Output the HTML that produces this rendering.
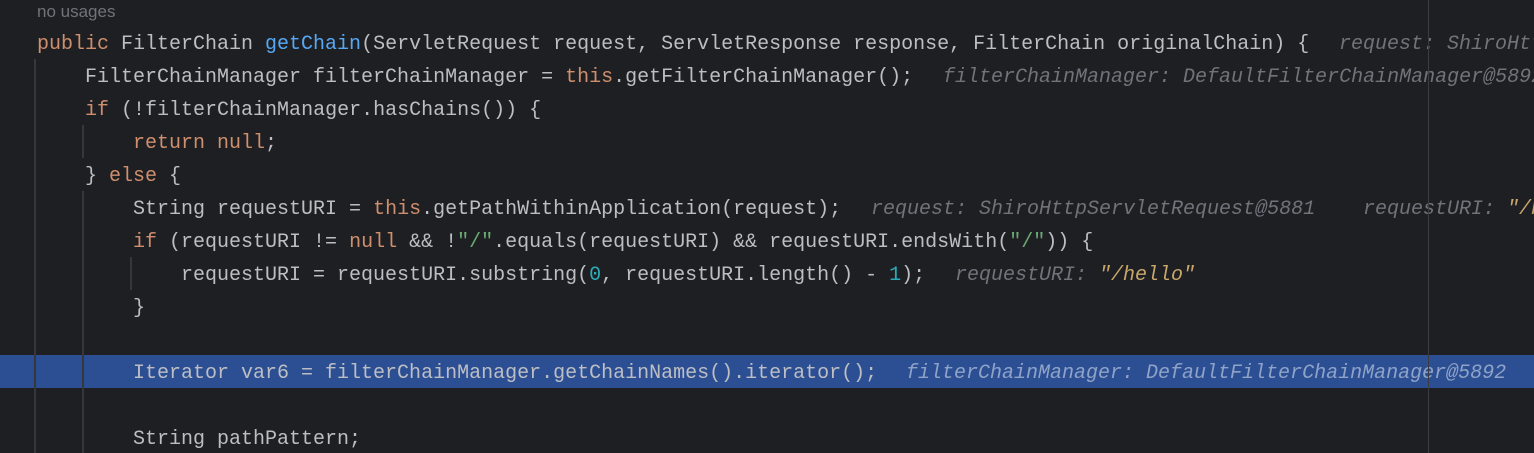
<!DOCTYPE html>
<html><head><meta charset="utf-8"><style>
html,body{margin:0;padding:0;background:#1e1f22;width:1534px;height:453px;overflow:hidden;position:relative}
.l{position:absolute;left:0;width:1534px;height:33px;line-height:33px;font-family:"Liberation Mono",monospace;font-size:20px;color:#bcbec4;white-space:pre;overflow:hidden}
.c{position:absolute;left:37px;top:2px}
.k{color:#cf8e6d}.m{color:#56a8f5}.s{color:#6aab73}.n{color:#2aacb8}
.h{position:absolute;top:2px;font-style:italic;color:#6f737a}
.y{color:#c9a76b}
.hl{background:#2c4f93}
.hl .h{color:#8fa3c8}
.g{position:absolute;width:2px;background:#35373c}
#nu{position:absolute;left:37px;top:0;font-family:"Liberation Sans",sans-serif;font-size:17px;color:#6f737a;line-height:24px}
#mg{position:absolute;left:1428px;top:0;width:1px;height:453px;background:#3a3c41}
</style></head><body>
<div id="nu">no usages</div>
<div class="l" style="top:26px"><span class="c"><span class="k">public</span> FilterChain <span class="m">getChain</span>(ServletRequest request, ServletResponse response, FilterChain originalChain) {</span><span class="h" style="left:1339px">request: ShiroHttpServletRequest@5881</span></div>
<div class="l" style="top:59px"><span class="c">    FilterChainManager filterChainManager = <span class="k">this</span>.getFilterChainManager();</span><span class="h" style="left:943px">filterChainManager: DefaultFilterChainManager@5892</span></div>
<div class="l" style="top:92px"><span class="c">    <span class="k">if</span> (!filterChainManager.hasChains()) {</span></div>
<div class="l" style="top:125px"><span class="c">        <span class="k">return null</span>;</span></div>
<div class="l" style="top:158px"><span class="c">    } <span class="k">else</span> {</span></div>
<div class="l" style="top:191px"><span class="c">        String requestURI = <span class="k">this</span>.getPathWithinApplication(request);</span><span class="h" style="left:871px">request: ShiroHttpServletRequest@5881</span><span class="h" style="left:1363px">requestURI: <span class="y">"/hello/"</span></span></div>
<div class="l" style="top:224px"><span class="c">        <span class="k">if</span> (requestURI != <span class="k">null</span> &amp;&amp; !<span class="s">"/"</span>.equals(requestURI) &amp;&amp; requestURI.endsWith(<span class="s">"/"</span>)) {</span></div>
<div class="l" style="top:257px"><span class="c">            requestURI = requestURI.substring(<span class="n">0</span>, requestURI.length() - <span class="n">1</span>);</span><span class="h" style="left:955px">requestURI: <span class="y">"/hello"</span></span></div>
<div class="l" style="top:290px"><span class="c">        }</span></div>
<div class="l hl" style="top:355px"><span class="c">        Iterator var6 = filterChainManager.getChainNames().iterator();</span><span class="h" style="left:906px">filterChainManager: DefaultFilterChainManager@5892</span></div>
<div class="l" style="top:421px"><span class="c">        String pathPattern;</span></div>
<div class="g" style="left:34px;top:59px;height:394px"></div>
<div class="g" style="left:82px;top:125px;height:33px"></div>
<div class="g" style="left:82px;top:191px;height:262px"></div>
<div class="g" style="left:130px;top:257px;height:33px"></div>
<div id="mg"></div>
</body></html>
